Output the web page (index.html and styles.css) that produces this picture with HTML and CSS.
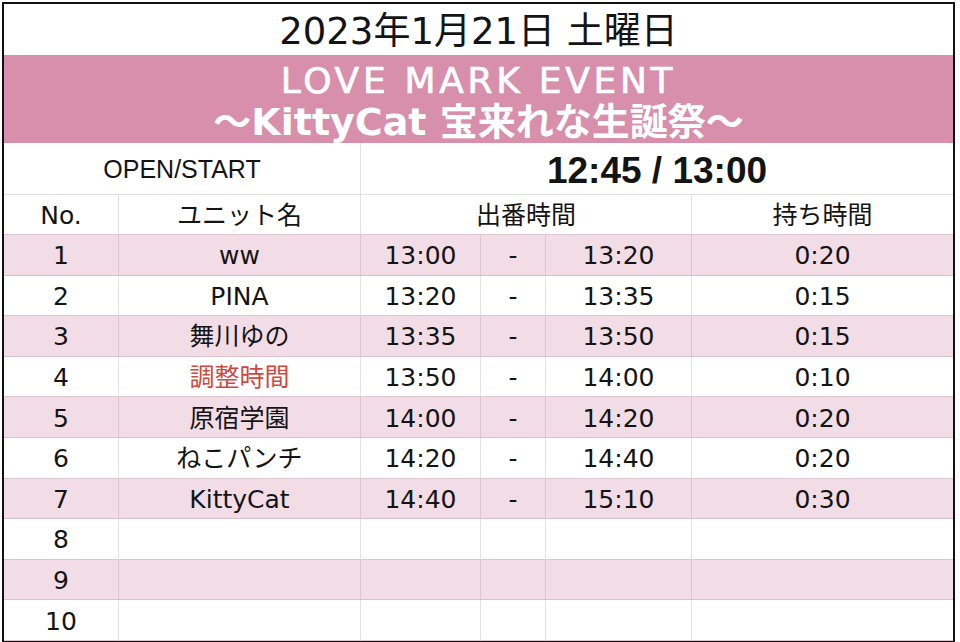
FILE: index.html
```html
<!DOCTYPE html>
<html lang="ja">
<head>
<meta charset="utf-8">
<title>LOVE MARK EVENT</title>
<link rel="stylesheet" href="styles.css">
</head>
<body>
<div class="sheet">
  <div class="row"><div class="c date span6">2023年1月21日 土曜日</div></div>
  <div class="row"><div class="c title span6"><div class="t1">LOVE MARK EVENT</div><div class="t2">〜KittyCat 宝来れな生誕祭〜</div></div></div>
  <div class="row open-row"><div class="c open span2">OPEN/START</div><div class="c opentime span4">12:45 / 13:00</div></div>
  <div class="row head"><div class="c">No.</div><div class="c">ユニット名</div><div class="c span3">出番時間</div><div class="c last">持ち時間</div></div>
  <div class="row pink"><div class="c">1</div><div class="c">ww</div><div class="c">13:00</div><div class="c">-</div><div class="c">13:20</div><div class="c last">0:20</div></div>
  <div class="row"><div class="c">2</div><div class="c">PINA</div><div class="c">13:20</div><div class="c">-</div><div class="c">13:35</div><div class="c last">0:15</div></div>
  <div class="row pink"><div class="c">3</div><div class="c">舞川ゆの</div><div class="c">13:35</div><div class="c">-</div><div class="c">13:50</div><div class="c last">0:15</div></div>
  <div class="row"><div class="c">4</div><div class="c red">調整時間</div><div class="c">13:50</div><div class="c">-</div><div class="c">14:00</div><div class="c last">0:10</div></div>
  <div class="row pink"><div class="c">5</div><div class="c">原宿学園</div><div class="c">14:00</div><div class="c">-</div><div class="c">14:20</div><div class="c last">0:20</div></div>
  <div class="row"><div class="c">6</div><div class="c">ねこパンチ</div><div class="c">14:20</div><div class="c">-</div><div class="c">14:40</div><div class="c last">0:20</div></div>
  <div class="row pink"><div class="c">7</div><div class="c">KittyCat</div><div class="c">14:40</div><div class="c">-</div><div class="c">15:10</div><div class="c last">0:30</div></div>
  <div class="row"><div class="c">8</div><div class="c"></div><div class="c"></div><div class="c"></div><div class="c"></div><div class="c last"></div></div>
  <div class="row pink"><div class="c">9</div><div class="c"></div><div class="c"></div><div class="c"></div><div class="c"></div><div class="c last"></div></div>
  <div class="row"><div class="c">10</div><div class="c"></div><div class="c"></div><div class="c"></div><div class="c"></div><div class="c last"></div></div>
</div>
</body>
</html>
```
FILE: styles.css
```css
html, body {
  margin: 0;
  padding: 0;
  background: #ffffff;
  overflow: hidden;
}
body {
  width: 960px;
  height: 642px;
  font-family: "DejaVu Sans", "Noto Sans CJK JP", sans-serif;
  color: #141414;
}
.sheet {
  margin: 2px 0 0 2px;
  width: 949px;
  border: 2px solid #111;
  display: grid;
  grid-template-columns: 115px 242px 120px 65px 146px 261px;
  grid-template-rows: 51px 88px 52px 40px repeat(10, 40.6px);
}
.row { display: contents; }
.c {
  box-sizing: border-box;
  display: flex;
  align-items: center;
  justify-content: center;
  border-right: 1px solid #e2e2e2;
  border-bottom: 1px solid #dcc6cf;
  font-size: 25px;
  white-space: nowrap;
  line-height: 1;
  padding-top: 2px;
}
.c.last { border-right: none; }
.span2 { grid-column: span 2; }
.span3 { grid-column: span 3; }
.span4 { grid-column: span 4; border-right: none; }
.span6 { grid-column: span 6; border-right: none; }
.date {
  font-size: 37px;
  border-bottom: none;
  padding-top: 3px;
}
.title {
  background: #d88fab;
  color: #ffffff;
  flex-direction: column;
  border-bottom: none;
  gap: 4px;
  padding-top: 5px;
}
.t1 {
  font-size: 36px;
  letter-spacing: 3.7px;
  -webkit-text-stroke: 0.7px #ffffff;
}
.t2 {
  font-size: 38px;
  font-weight: bold;
}
.open-row .c { border-bottom-color: #e0e0e0; }
.open {
  font-family: "Liberation Sans", Arial, sans-serif;
  font-size: 25px;
}
.opentime {
  font-family: "Liberation Sans", Arial, sans-serif;
  font-weight: bold;
  font-size: 37px;
  padding-left: 0;
  padding-top: 3px;
}
.pink .c {
  background: #f2dde6;
  border-right-color: #dec4cf;
  border-bottom-color: #d9c0cb;
}
.pink .c.last { border-right: none; }
.red { color: #d0493f; }
```
